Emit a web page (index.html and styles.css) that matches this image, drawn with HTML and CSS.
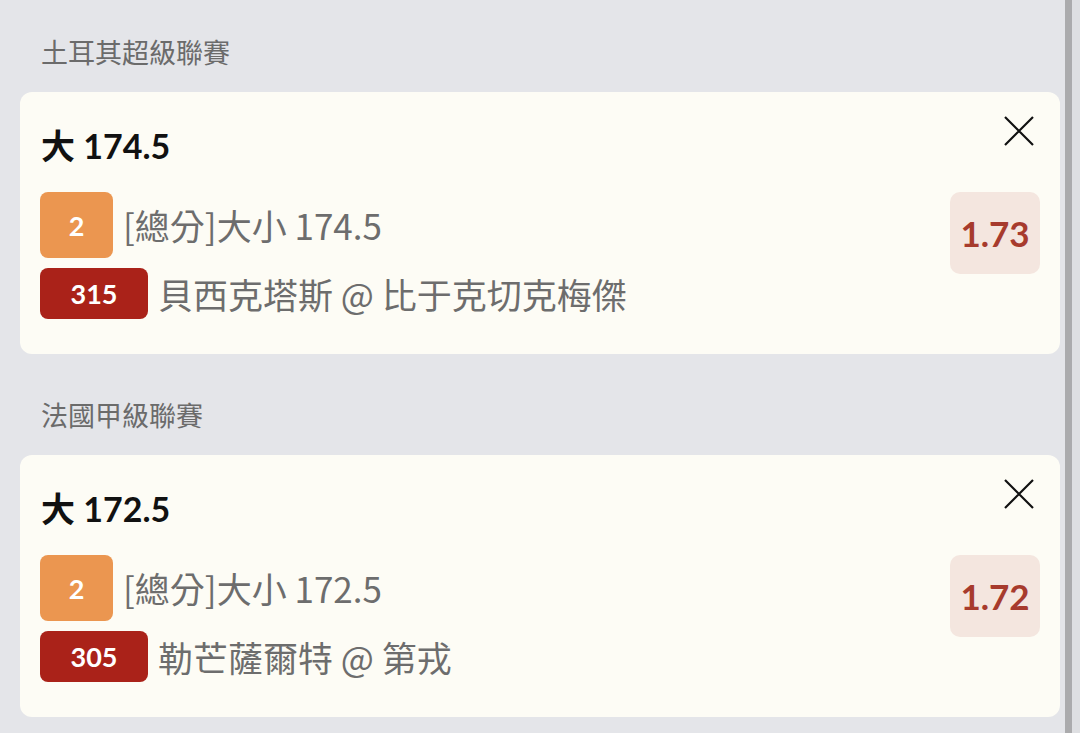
FILE: index.html
```html
<!DOCTYPE html>
<html lang="zh-Hant">
<head>
  <meta charset="UTF-8">
  <meta name="viewport" content="width=device-width, initial-scale=1" />
  <title>投注單</title>
  <link rel="stylesheet" href="styles.css">
</head>
<body>
  <div class="feed">
    <section class="league">
      <h2 class="league-name">土耳其超級聯賽</h2>
      <div class="bet-card">
        <div class="bet-head">
          <span class="bet-pick">大 174.5</span>
          <button class="close-btn" type="button" aria-label="移除">
            <svg width="30" height="30" viewBox="0 0 30 30"><path d="M1 1 L29 29 M29 1 L1 29" stroke="#111" stroke-width="2.2" fill="none"/></svg>
          </button>
        </div>
        <div class="bet-body">
          <div class="bet-info">
            <div class="bet-row">
              <span class="tag tag-orange">2</span>
              <span class="bet-text">[總分]大小 174.5</span>
            </div>
            <div class="bet-row">
              <span class="tag tag-red">315</span>
              <span class="bet-text">貝西克塔斯 @ 比于克切克梅傑</span>
            </div>
          </div>
          <div class="odds">1.73</div>
        </div>
      </div>
    </section>

    <section class="league">
      <h2 class="league-name">法國甲級聯賽</h2>
      <div class="bet-card">
        <div class="bet-head">
          <span class="bet-pick">大 172.5</span>
          <button class="close-btn" type="button" aria-label="移除">
            <svg width="30" height="30" viewBox="0 0 30 30"><path d="M1 1 L29 29 M29 1 L1 29" stroke="#111" stroke-width="2.2" fill="none"/></svg>
          </button>
        </div>
        <div class="bet-body">
          <div class="bet-info">
            <div class="bet-row">
              <span class="tag tag-orange">2</span>
              <span class="bet-text">[總分]大小 172.5</span>
            </div>
            <div class="bet-row">
              <span class="tag tag-red">305</span>
              <span class="bet-text">勒芒薩爾特 @ 第戎</span>
            </div>
          </div>
          <div class="odds">1.72</div>
        </div>
      </div>
    </section>
  </div>
  <div class="scrollbar"></div>
</body>
</html>
```

FILE: styles.css
```css
html, body {
  height: 100%;
}

body {
  margin: 0;
  display: flex;
  background: #e4e5e9;
  font-family: Lato, "Noto Sans CJK TC", sans-serif;
  overflow: hidden;
}

.feed {
  flex: 1;
  padding: 0 5px 0 20px;
}

.scrollbar {
  width: 8px;
  border-left: 7px solid #ababad;
  background: #dedfe2;
}

.league {
  padding-top: 43px;
}

.league:first-child {
  padding-top: 34px;
}

.league-name {
  margin: 0 0 22px 21px;
  font-family: "Noto Sans CJK TC", sans-serif;
  font-size: 27px;
  line-height: 36px;
  font-weight: 400;
  color: #6b6b6b;
}

.bet-card {
  background: #fdfcf5;
  border-radius: 12px;
  padding: 32px 20px 35px 20px;
}

.bet-head {
  display: flex;
  justify-content: space-between;
  align-items: center;
  height: 40px;
}

.bet-pick {
  font-size: 34px;
  font-weight: 700;
  color: #111;
  padding-left: 1px;
}

.close-btn {
  border: 0;
  background: none;
  padding: 0;
  margin: -26px 6px 0 0;
  cursor: pointer;
  display: flex;
}

.bet-body {
  display: flex;
  justify-content: space-between;
  align-items: flex-start;
  margin-top: 28px;
}

.bet-info {
  display: flex;
  flex-direction: column;
  gap: 10px;
}

.bet-row {
  display: flex;
  align-items: center;
  gap: 10px;
}

.tag {
  display: flex;
  align-items: center;
  justify-content: center;
  color: #fff;
  font-weight: 700;
  font-size: 27px;
  border-radius: 8px;
}

.tag-orange {
  width: 73px;
  height: 66px;
  background: #eb9650;
}

.tag-red {
  width: 108px;
  height: 51px;
  background: #aa2219;
}

.bet-text {
  font-family: "Noto Sans CJK TC", sans-serif;
  font-size: 35px;
  line-height: 44px;
  color: #6d6d6d;
  white-space: nowrap;
}

.odds {
  width: 90px;
  height: 82px;
  border-radius: 10px;
  background: #f4e6df;
  color: #a73b2d;
  font-size: 35px;
  font-weight: 700;
  display: flex;
  align-items: center;
  justify-content: center;
}
```
